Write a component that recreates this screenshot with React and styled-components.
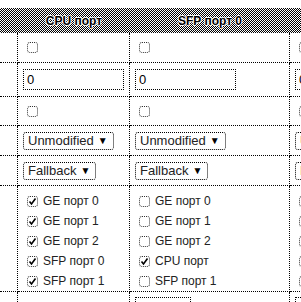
import styled, { createGlobalStyle } from "styled-components";

const GlobalStyle = createGlobalStyle`
    html, body {
        margin: 0;
        padding: 0;
        background: #fff;
    }
    body {
        font-family: "Liberation Sans", Arial, sans-serif;
        font-size: 13px;
        color: #111;
        overflow: hidden;
    }
`

const Page = styled.div`
    width: 301px;
    height: 302px;
    padding-top: 8px;
    box-sizing: border-box;
    overflow: hidden;
`

const Grid = styled.div`
    display: grid;
    grid-template-columns: 18px 112px 160px 160px;
    grid-template-rows: 25px 30px 34px 29px 30px 30px 106px 40px;
    width: max-content;
`

const HeadCell = styled.div`
    display: flex;
    align-items: center;
    justify-content: center;
    font-size: 12px;
    font-weight: 700;
    color: #000;
    background-color: #fff;
    background-image: repeating-conic-gradient(#000 0 25%, transparent 0 50%);
    background-size: 2px 2px;
    text-shadow: 1px 0 0 #fff, -1px 0 0 #fff, 0 1px 0 #fff, 0 -1px 0 #fff;
    white-space: nowrap;
`

const Cell = styled.div`
    box-sizing: border-box;
    display: flex;
    flex-direction: ${(p) => (p.$list ? "column" : "row")};
    align-items: ${(p) => (p.$top ? "flex-start" : "center")};
    padding: ${(p) => (p.$top ? "5px 5px 0" : "0 5px")};
    border-right: 1px dotted #000;
    border-bottom: 1px dotted #000;
    overflow: hidden;
`

const Box = styled.span`
    flex: none;
    width: 11px;
    height: 11px;
    margin-left: 4px;
    box-sizing: border-box;
    border: 1px dotted #333;
    border-radius: 3px;
    background-image: radial-gradient(#888 0.6px, transparent 0.7px);
    background-size: 2px 2px;
    background-position: 1px 1px;
    display: inline-flex;
    align-items: center;
    justify-content: center;
`

const Check = ({ on }) => (
    <Box>
        {on ? (
            <svg width="9" height="9" viewBox="0 0 9 9">
                <path d="M1.5 4.5 L3.5 7 L7.5 1.5" fill="none" stroke="#000" strokeWidth="1.6" />
            </svg>
        ) : null}
    </Box>
)

const Field = styled.input`
    box-sizing: border-box;
    width: ${(p) => p.$w || 101}px;
    height: 21px;
    margin: 0;
    padding: 0 3px;
    border: 1px dotted #000;
    border-radius: 0;
    background: #fff;
    font-family: "Liberation Sans", Arial, sans-serif;
    font-size: 13px;
    color: #000;
    outline: none;
    flex: none;
`

const Picker = styled.span`
    box-sizing: border-box;
    display: inline-flex;
    align-items: center;
    gap: 4px;
    height: 18px;
    padding: 0 5px 0 4px;
    border: 1px dotted #000;
    border-radius: 3px;
    font-size: 13px;
    color: #222;
    white-space: nowrap;
    flex: none;
`

const Arrow = styled.span`
    font-size: 10px;
    color: #000;
`

const Item = styled.label`
    display: flex;
    align-items: center;
    gap: 5px;
    height: 20px;
    font-size: 12px;
    color: #222;
    white-space: nowrap;
`

const Select = ({ children }) => (
    <Picker>
        {children}
        <Arrow>▼</Arrow>
    </Picker>
)

const heads = ["CPU порт", "SFP порт 0", "SFP порт 1"];

const lists = [
    [["GE порт 0", true], ["GE порт 1", true], ["GE порт 2", true], ["SFP порт 0", true], ["SFP порт 1", true]],
    [["GE порт 0", false], ["GE порт 1", false], ["GE порт 2", false], ["CPU порт", true], ["SFP порт 1", false]],
    [["GE порт 0", false], ["GE порт 1", false], ["GE порт 2", false], ["CPU порт", false], ["SFP порт 0", false]],
]

const App = () => {
    const cols = [0, 1, 2];
    return (
        <Page>
            <GlobalStyle />
            <Grid>
                <HeadCell />
                {heads.map((h) => <HeadCell key={h}>{h}</HeadCell>)}

                <Cell />
                {cols.map((c) => <Cell key={"a" + c}><Check /></Cell>)}

                <Cell />
                {cols.map((c) => <Cell key={"b" + c}><Field readOnly defaultValue="0" /></Cell>)}

                <Cell />
                {cols.map((c) => <Cell key={"c" + c}><Check /></Cell>)}

                <Cell />
                {cols.map((c) => <Cell key={"d" + c}><Select>Unmodified</Select></Cell>)}

                <Cell />
                {cols.map((c) => <Cell key={"e" + c}><Select>Fallback</Select></Cell>)}

                <Cell />
                {lists.map((list, c) => (
                    <Cell key={"f" + c} $list $top>
                        {list.map(([name, on]) => (
                            <Item key={name}><Check on={on} />{name}</Item>
                        ))}
                    </Cell>
                ))}

                <Cell />
                <Cell $top />
                <Cell $top><Field $w={56} readOnly /></Cell>
                <Cell $top><Field $w={56} readOnly /></Cell>
            </Grid>
        </Page>
    );
}

export default App;
